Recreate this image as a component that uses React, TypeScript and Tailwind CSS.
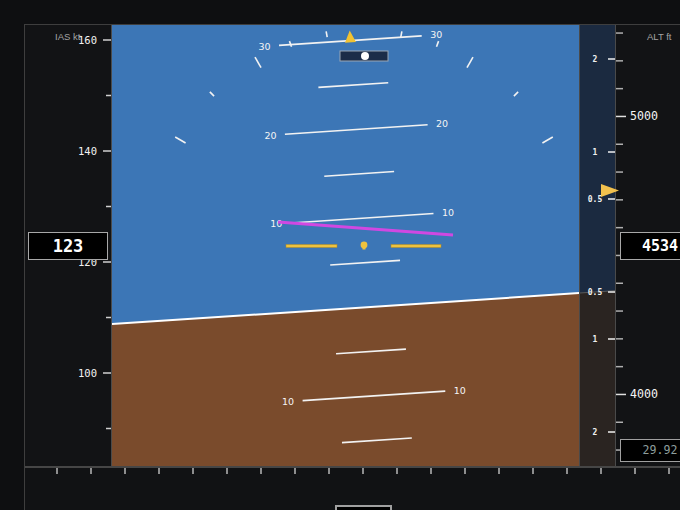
import React from "react"

// attitude geometry (page coordinates)
const TH = (3.798 * Math.PI) / 180
const C = Math.cos(TH)
const S = Math.sin(TH)
const CX = 364
const CY = 246
const PX = 8.9 // px per degree of pitch
const HZ = 61.2 // horizon offset from aircraft symbol, local frame

function P(lx: number, ly: number): [number, number] {
    return [CX + lx * C + ly * S, CY - lx * S + ly * C]
}
const pts = (list: [number, number][]) => list.map((p) => p.join(",")).join(" ")

const groundPoly = pts([P(-500, HZ), P(500, HZ), P(500, 700), P(-500, 700)])
const [hx1, hy1] = P(-500, HZ)
const [hx2, hy2] = P(500, HZ)

const pitchLines = [30, 25, 20, 15, 10, 5, -5, -10, -15]

function Attitude() {
    return (
        <svg viewBox="112 25 467 441" className="w-full h-full block">
            <rect x="100" y="0" width="600" height="500" fill="#3c76b6" />
            <polygon points={groundPoly} fill="#7a4b2c" />
            <line x1={hx1} y1={hy1} x2={hx2} y2={hy2} stroke="#ffffff" strokeWidth="2" />

            {pitchLines.map((p) => {
                const ly = HZ - p * PX
                const half = p % 10 === 0 ? 71.5 : 35
                const [x1, y1] = P(-half, ly)
                const [x2, y2] = P(half, ly)
                const [lx, lyy] = P(-86, ly)
                const [rx, ryy] = P(86, ly)
                const lbl = String(Math.abs(p))
                return (
                    <g key={p}>
                        <line x1={x1} y1={y1} x2={x2} y2={y2} stroke="#f2f2f2" strokeWidth="1.6" />
                        {p % 10 === 0 && (
                            <>
                                <text x={lx} y={lyy} fill="#f4f4f4" fontSize="9.5" textAnchor="middle" dominantBaseline="central">{lbl}</text>
                                <text x={rx} y={ryy} fill="#f4f4f4" fontSize="9.5" textAnchor="middle" dominantBaseline="central">{lbl}</text>
                            </>
                        )}
                    </g>
                )
            })}

            {/* roll scale */}
            {[10, 20, 30, 45, 60].flatMap((a) =>
                [-1, 1].map((s) => {
                    const r = (a * Math.PI) / 180
                    const r1 = a === 30 || a === 60 ? 206 : 212
                    const r2 = 218
                    return (
                        <line
                            key={a * s}
                            x1={CX + s * r1 * Math.sin(r)}
                            y1={CY - r1 * Math.cos(r)}
                            x2={CX + s * r2 * Math.sin(r)}
                            y2={CY - r2 * Math.cos(r)}
                            stroke="#f2f2f2"
                            strokeWidth="1.6"
                        />
                    )
                })
            )}
            <polygon points={pts([P(0, -216), P(-5.5, -204), P(5.5, -204)])} fill="#f1c232" />

            {/* slip indicator */}
            <rect x="340" y="51" width="48" height="10" fill="#1b2c48" stroke="#9aa6b4" strokeWidth="1" />
            <circle cx="365" cy="56" r="4" fill="#ffffff" />

            {/* flight director */}
            <line x1="278" y1="222" x2="453" y2="235" stroke="#d048e2" strokeWidth="3" />

            {/* aircraft symbol */}
            <rect x="286" y="244.5" width="51" height="3" fill="#eec23e" stroke="#b08a20" strokeWidth="0.5" />
            <rect x="391" y="244.5" width="50" height="3" fill="#eec23e" stroke="#b08a20" strokeWidth="0.5" />
            <circle cx="364" cy="245" r="3.4" fill="#eec23e" />
            <rect x="362.5" y="246" width="3" height="3.5" fill="#eec23e" />
        </svg>
    )
}

function Vsi() {
    const marks: [string, number][] = [
        ["2", 59],
        ["1", 152],
        ["0.5", 199],
        ["0.5", 292],
        ["1", 339],
        ["2", 432],
    ]
    return (
        <svg viewBox="580 25 35 441" className="w-full h-full block">
            <rect x="570" y="0" width="60" height="500" fill="#1b2a40" />
            <polygon points={groundPoly} fill="#2a2421" />
            <line x1={hx1} y1={hy1} x2={hx2} y2={hy2} stroke="#5a5a5a" strokeWidth="1" />
            {marks.map(([t, y], i) => (
                <g key={i}>
                    <line x1="608" y1={y} x2="616" y2={y} stroke="#f0f0f0" strokeWidth="1.5" />
                    <text x="595" y={y} fill="#f0f0f0" fontSize="8" fontWeight="bold" textAnchor="middle" dominantBaseline="central">{t}</text>
                </g>
            ))}
        </svg>
    )
}

function SpeedTape() {
    const ys = (v: number) => 262 - (v - 120) * 5.55
    const vals = [160, 150, 140, 130, 120, 110, 100, 90]
    return (
        <svg viewBox="25 25 86 441" className="w-full h-full block">
            <text x="55" y="36" fill="#a4a4a4" fontSize="9.5" className="font-['Liberation_Sans',sans-serif]" dominantBaseline="central">IAS kt</text>
            {vals.map((v) => {
                const y = ys(v)
                const major = v % 20 === 0
                return (
                    <g key={v}>
                        <line x1={major ? 103 : 106} y1={y} x2="112" y2={y} stroke="#d0d0d0" strokeWidth="1.5" />
                        {major && (
                            <text x="97" y={y} fill="#f2f2f2" fontSize="10.5" textAnchor="end" dominantBaseline="central">{v}</text>
                        )}
                    </g>
                )
            })}
        </svg>
    )
}

function AltTape() {
    const ya = (a: number) => 246 - (a - 4534) * 0.278
    const vals: number[] = []
    for (let a = 3700; a <= 5400; a += 100) vals.push(a)
    return (
        <svg viewBox="616 25 64 441" className="w-full h-full block">
            <text x="647" y="36" fill="#a4a4a4" fontSize="9.5" className="font-['Liberation_Sans',sans-serif]" dominantBaseline="central">ALT ft</text>
            {vals.map((a) => {
                const y = ya(a)
                const major = a % 1000 === 0
                return (
                    <g key={a}>
                        <line x1="616" y1={y} x2={major ? 626 : 623} y2={y} stroke={major ? "#e0e0e0" : "#b0b0b0"} strokeWidth="1.5" />
                        {major && (
                            <text x="630" y={y} fill="#f4f4f4" fontSize="11.6" dominantBaseline="central">{a}</text>
                        )}
                    </g>
                )
            })}
        </svg>
    )
}

export default function App() {
    const hdgTicks = Array.from({ length: 19 }, (_, i) => 57 + i * 34)
    return (
        <div className="relative w-[680px] h-[510px] overflow-hidden bg-[#0e0f11] font-['DejaVu_Sans_Mono',monospace] select-none">
            <div className="pt-[24px] pl-[24px] h-full">
                <div className="h-full flex flex-col border-l border-t border-[#3e3e3e]">
                    <div className="flex h-[441px]">
                        <div className="w-[87px] h-full bg-[#121315] border-r border-[#4a4a4a]">
                            <SpeedTape />
                        </div>
                        <div className="w-[467px] h-full font-['DejaVu_Sans',sans-serif]">
                            <Attitude />
                        </div>
                        <div className="w-[37px] h-full border-l border-r border-[#4a4a4a]">
                            <Vsi />
                        </div>
                        <div className="flex-1 h-full bg-[#121315]">
                            <AltTape />
                        </div>
                    </div>
                    <div className="flex-1 flex flex-col border-t-2 border-[#464646] bg-[#111214]">
                        <svg width="655" height="8" viewBox="25 468 655 8" className="block">
                            {hdgTicks.map((x) => (
                                <line key={x} x1={x} y1="468" x2={x} y2="474" stroke="#b8b8b8" strokeWidth="1.5" />
                            ))}
                        </svg>
                        <div className="pl-[310px] pt-[29px]">
                            <div className="w-[57px] h-[20px] bg-black border-2 border-[#a0a0a0]" />
                        </div>
                    </div>
                </div>
            </div>

            {/* readouts lying over the tapes */}
            <div className="absolute left-[28px] top-[232px] w-[80px] h-[28px] bg-black border-[1.5px] border-[#a8a8a8] flex items-center justify-center text-white font-bold text-[17px] leading-none">
                123
            </div>
            <div className="absolute left-[620px] top-[232px] w-[80px] h-[28px] bg-black border-[1.5px] border-[#a8a8a8] flex items-center justify-center text-white font-bold text-[15px] leading-none">
                4534
            </div>
            <div className="absolute left-[620px] top-[439px] w-[80px] h-[23px] bg-black border-[1.5px] border-[#a0a0a0] flex items-center justify-center text-[#8e9e9c] text-[11.6px] leading-none">
                29.92
            </div>
            <svg className="absolute left-[600px] top-[183px]" width="20" height="15" viewBox="600 183 20 15">
                <polygon points="601,184 601,197 619,190.5" fill="#f2c14e" />
            </svg>
        </div>
    )
}
